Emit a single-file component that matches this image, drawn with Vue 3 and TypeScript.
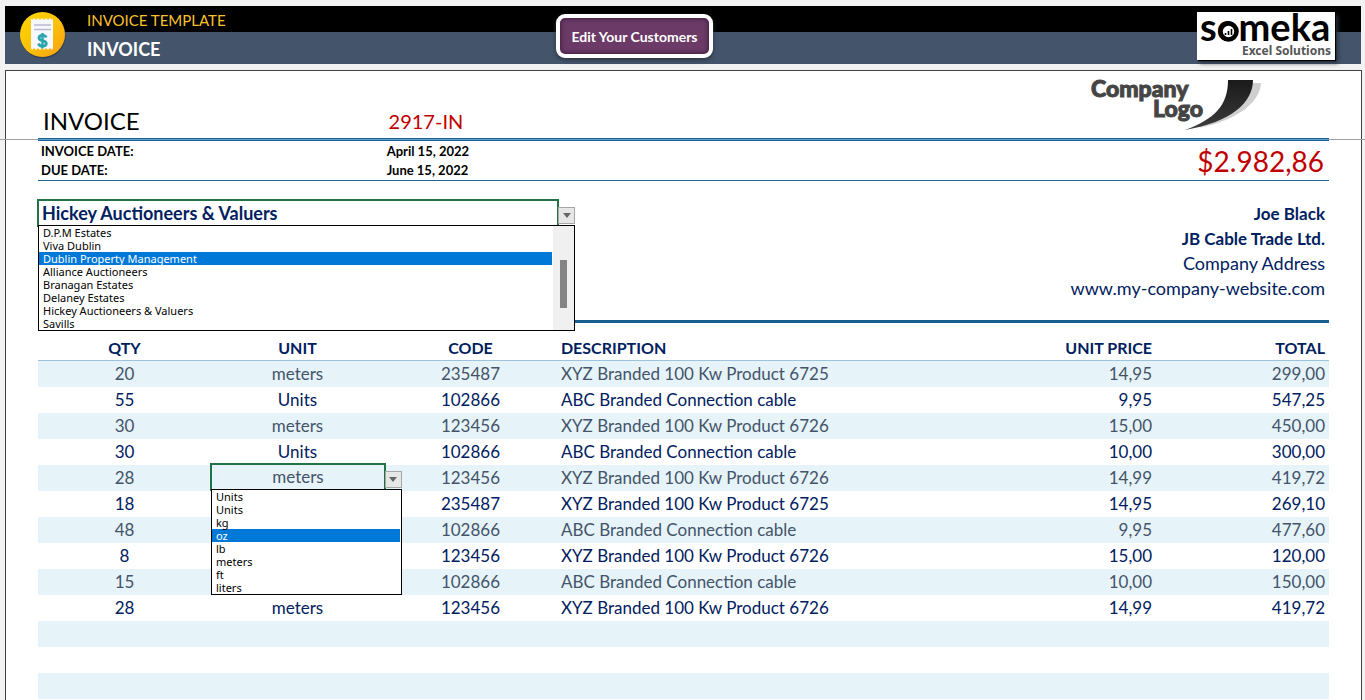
<script setup lang="ts">
import { ref } from 'vue'

interface Line {
  qty: string
  unit: string
  code: string
  description: string
  price: string
  total: string
}

const cable = 'ABC Branded Connection cable'
const product = (n: number): string => `XYZ Branded 100 Kw Product ${n}`

const lines: Line[] = [
  { qty: '20', unit: 'meters', code: '235487', description: product(6725), price: '14,95', total: '299,00' },
  { qty: '55', unit: 'Units', code: '102866', description: cable, price: '9,95', total: '547,25' },
  { qty: '30', unit: 'meters', code: '123456', description: product(6726), price: '15,00', total: '450,00' },
  { qty: '30', unit: 'Units', code: '102866', description: cable, price: '10,00', total: '300,00' },
  { qty: '28', unit: 'meters', code: '123456', description: product(6726), price: '14,99', total: '419,72' },
  { qty: '18', unit: 'meters', code: '235487', description: product(6725), price: '14,95', total: '269,10' },
  { qty: '48', unit: 'Units', code: '102866', description: cable, price: '9,95', total: '477,60' },
  { qty: '8', unit: 'meters', code: '123456', description: product(6726), price: '15,00', total: '120,00' },
  { qty: '15', unit: 'Units', code: '102866', description: cable, price: '10,00', total: '150,00' },
  { qty: '28', unit: 'meters', code: '123456', description: product(6726), price: '14,99', total: '419,72' },
]
const emptyRows = 3
const activeRow = 4

const customers: string[] = [
  'D.P.M Estates',
  'Viva Dublin',
  'Dublin Property Management',
  'Alliance Auctioneers',
  'Branagan Estates',
  'Delaney Estates',
  'Hickey Auctioneers & Valuers',
  'Savills',
]
const customer = ref('Hickey Auctioneers & Valuers')
const hotCustomer = ref(2)

const units: string[] = ['Units', 'Units', 'kg', 'oz', 'lb', 'meters', 'ft', 'liters']
const activeUnit = ref('meters')
const hotUnit = ref(3)
</script>

<template>
  <div class="page">
    <header class="banner">
      <svg class="badge" viewBox="0 0 48 50" aria-hidden="true">
        <defs>
          <linearGradient id="gold" x1="0" y1="0" x2="1" y2="1">
            <stop offset="0" stop-color="#ffd800" />
            <stop offset="0.55" stop-color="#fdbf0b" />
            <stop offset="1" stop-color="#f99d12" />
          </linearGradient>
        </defs>
        <circle cx="24" cy="25" r="22.5" fill="#2b3442" opacity="0.6" />
        <circle cx="23.5" cy="23.5" r="22.5" fill="url(#gold)" />
        <path
          d="M13 9l2-2 2 2 2-2 2 2 2-2 2 2 2-2 2 2 2-2 2 2 1-2v30l-1 2-2-2-2 2-2-2-2 2-2-2-2 2-2-2-2 2-2-2-2 2-1-2V7z"
          fill="#f7f8fc"
        />
        <path d="M15 14h17M15 18.5h17" stroke="#b9b9cf" stroke-width="1.6" />
        <path
          d="M27.2 26.500c-.6-1.600-1.800-2.200-3.700-2.200-2 0-3.500.9-3.500 2.600 0 3.600 7.300 1.900 7.300 5.500 0 1.800-1.500 2.700-3.800 2.700-2.100 0-3.500-.9-4-2.600"
          fill="none"
          stroke="#2aa5ad"
          stroke-width="2.8"
        />
        <path d="M23.5 22v15.500" stroke="#2aa5ad" stroke-width="2.4" />
      </svg>
      <div class="titles">
        <div class="title-top">INVOICE TEMPLATE</div>
        <div class="title-main">INVOICE</div>
      </div>
      <button class="edit" type="button">Edit Your Customers</button>
      <div class="brand">
        <svg viewBox="0 0 138 48" role="img" aria-label="someka Excel Solutions">
          <text class="brand-name" x="3" y="29">someka</text>
          <circle cx="31.5" cy="19.5" r="8" fill="#fff" stroke="#000" stroke-width="4.6" />
          <path d="M28.500 23v-2M31.500 23v-4M34.500 23v-6" stroke="#000" stroke-width="1.6" />
          <text class="brand-sub" x="134" y="43" text-anchor="end">Excel Solutions</text>
        </svg>
      </div>
    </header>

    <main class="sheet">
      <section class="heading">
        <h1>INVOICE</h1>
        <div class="number">2917-IN</div>
        <svg class="company-logo" viewBox="0 0 174 56" role="img" aria-label="Company Logo">
          <defs>
            <linearGradient id="ink" x1="0" y1="0" x2="0" y2="1">
              <stop offset="0" stop-color="#1a1a1a" />
              <stop offset="1" stop-color="#3c3c3c" />
            </linearGradient>
          </defs>
          <text class="logo-text" x="0" y="22">Company</text>
          <text class="logo-text" x="62" y="42">Logo</text>
          <path d="M160 8h10c-1 18-20 36-62 45 28-10 46-22 52-45z" fill="#cfcfcf" />
          <path d="M137 5h25c0 22-21 42-68 50 30-11 43-25 43-50z" fill="url(#ink)" />
        </svg>
      </section>
      <div class="freeze"><span></span><span class="double"></span><span></span></div>

      <section class="dates">
        <dl>
          <dt>INVOICE DATE:</dt>
          <dd>April 15, 2022</dd>
          <dt>DUE DATE:</dt>
          <dd>June 15, 2022</dd>
        </dl>
        <div class="amount">$2.982,86</div>
      </section>

      <section class="parties">
        <div class="picker customer">
          <select v-model="customer" aria-label="Customer">
            <option v-for="c in customers" :key="c">{{ c }}</option>
          </select>
          <button class="arrow" type="button" aria-label="Show customers">
            <svg viewBox="0 0 8 5"><path d="M0 0h8L4 5z" fill="#666" /></svg>
          </button>
          <div class="popup">
            <ul role="listbox" aria-label="Customers">
              <li
                v-for="(c, i) in customers"
                :key="c"
                role="option"
                :aria-selected="i === hotCustomer"
                :class="{ hot: i === hotCustomer }"
                @mouseenter="hotCustomer = i"
                @click="customer = c"
              >{{ c }}</li>
            </ul>
            <div class="track"><div class="thumb"></div></div>
          </div>
        </div>
        <address>
          <strong>Joe Black</strong>
          <strong>JB Cable Trade Ltd.</strong>
          <span>Company Address</span>
          <span>www.my-company-website.com</span>
        </address>
      </section>

      <table>
        <colgroup>
          <col class="narrow" />
          <col class="narrow" />
          <col class="narrow" />
          <col />
          <col class="narrow" />
          <col class="narrow" />
        </colgroup>
        <thead>
          <tr>
            <th>QTY</th>
            <th>UNIT</th>
            <th>CODE</th>
            <th class="left">DESCRIPTION</th>
            <th class="right">UNIT PRICE</th>
            <th class="right">TOTAL</th>
          </tr>
        </thead>
        <tbody>
          <tr v-for="(line, r) in lines" :key="r">
            <td>{{ line.qty }}</td>
            <td v-if="r === activeRow">
              <div class="picker unit">
                <select v-model="activeUnit" aria-label="Unit">
                  <option v-for="(u, i) in units.slice(1)" :key="i">{{ u }}</option>
                </select>
                <button class="arrow" type="button" aria-label="Show units">
                  <svg viewBox="0 0 8 5"><path d="M0 0h8L4 5z" fill="#666" /></svg>
                </button>
                <div class="popup">
                  <ul role="listbox" aria-label="Units">
                    <li
                      v-for="(u, i) in units"
                      :key="i"
                      role="option"
                      :aria-selected="i === hotUnit"
                      :class="{ hot: i === hotUnit }"
                      @mouseenter="hotUnit = i"
                      @click="activeUnit = u"
                    >{{ u }}</li>
                  </ul>
                </div>
              </div>
            </td>
            <td v-else>{{ line.unit }}</td>
            <td>{{ line.code }}</td>
            <td class="left">{{ line.description }}</td>
            <td class="right">{{ line.price }}</td>
            <td class="right">{{ line.total }}</td>
          </tr>
          <tr v-for="n in emptyRows" :key="'empty' + n">
            <td v-for="c in 6" :key="c"></td>
          </tr>
        </tbody>
      </table>
    </main>
  </div>
</template>

<style>
body {
  margin: 0;
  background: #f2f2f2;
}
</style>

<style scoped>
* {
  box-sizing: border-box;
}
.page {
  display: flex;
  flex-direction: column;
  height: 100vh;
  overflow: hidden;
  padding: 6px 3px 0 5px;
  font-family: Lato, "Liberation Sans", sans-serif;
  color: #002060;
}
.banner {
  display: grid;
  grid-template-columns: 82px calc(41% - 87px) auto 1fr;
  flex: none;
  height: 58px;
  margin-right: 1px;
  background: linear-gradient(#000 26px, #44546a 26px);
}
.badge {
  width: 48px;
  height: 50px;
  margin: 5px 0 0 14px;
}
.title-top {
  height: 26px;
  font-size: 15px;
  line-height: 28px;
  color: #fbc02d;
}
.title-main {
  font-size: 18px;
  font-weight: 700;
  line-height: 34px;
  color: #fff;
}
.edit {
  width: 157px;
  height: 44px;
  margin-top: 8px;
  padding: 2px 0 0;
  border: 4px solid #fff;
  border-radius: 9px;
  background: #6b3a67;
  box-shadow: inset 0 0 4px 1px #40203f, 0 2px 4px #2b3442;
  font: 700 14px/20px Lato, "Liberation Sans", sans-serif;
  color: #fff;
}
.brand {
  justify-self: end;
  width: 138px;
  height: 48px;
  margin: 6px 26px 0 0;
  background: #fff;
  box-shadow: 1px 1px 1px #000, 3px 3px 4px #2b3442;
}
.brand svg {
  display: block;
  overflow: visible;
}
.brand-name {
  font-size: 38px;
  font-weight: 700;
}
.brand-sub {
  font: 700 12px "Noto Sans", sans-serif;
  fill: #555;
}
.sheet {
  flex: 1;
  margin-top: 6px;
  padding: 0 32px;
  border: 1px solid #404040;
  border-bottom: 0;
  background: #fff;
}
.heading {
  display: grid;
  grid-template-columns: 27% 1fr 174px;
  height: 67px;
}
h1 {
  margin: 0;
  padding: 34px 0 0 5px;
  font-size: 24px;
  font-weight: 400;
  line-height: 32px;
  color: #000;
}
.number {
  padding: 34px 0 0 2px;
  font-size: 20px;
  line-height: 32px;
  color: #c00000;
}
.company-logo {
  width: 174px;
  height: 56px;
  margin: 4px 0 0 -64px;
}
.logo-text {
  font-size: 23px;
  font-weight: 900;
  fill: #454545;
  stroke: #454545;
  stroke-width: 1px;
}
.freeze {
  display: grid;
  grid-template-columns: 38px 1fr 36px;
  align-items: center;
  height: 3px;
  margin: 0 -36px 0 -38px;
}
.freeze span {
  height: 1px;
  background: #a0a0a0;
}
.freeze .double {
  height: 3px;
  border: solid #1f5f8f;
  border-width: 1px 0;
  background: #5fa3cf;
}
.dates {
  display: flex;
  justify-content: space-between;
  height: 40px;
  border-bottom: 1px solid #1f6391;
}
dl {
  display: grid;
  grid-template-columns: 27% 1fr;
  flex: 1;
  margin: 0 -132px 0 0;
  padding-top: 1px;
  font-size: 13px;
  font-weight: 700;
  line-height: 19px;
  color: #000;
}
dt {
  padding-left: 3px;
}
dd {
  margin: 0;
}
.amount {
  padding-right: 5px;
  font-size: 28px;
  line-height: 40px;
  color: #c00000;
}
.parties {
  display: flex;
  justify-content: space-between;
  align-items: flex-start;
  height: 142px;
  padding-top: 18px;
  border-bottom: 3px solid #156090;
}
.picker {
  position: relative;
}
.customer {
  width: 522px;
  margin-left: -1px;
}
.picker select {
  display: block;
  width: 100%;
  height: 28px;
  margin: 0;
  padding: 0 3px;
  border: 2px solid #217346;
  border-radius: 0;
  outline: 0;
  appearance: none;
  background: transparent;
  font: 700 18px/24px Lato, "Liberation Sans", sans-serif;
  color: #002060;
}
.arrow {
  position: absolute;
  top: 8px;
  left: 100%;
  display: grid;
  place-items: center;
  width: 17px;
  height: 17px;
  margin-left: -1px;
  padding: 0;
  border: 1px solid #a6a6a6;
  background: #e6e6e6;
}
.arrow svg {
  width: 8px;
  height: 5px;
}
.popup {
  position: absolute;
  top: 26px;
  left: 1px;
  right: -16px;
  z-index: 1;
  display: flex;
  border: 1px solid #000;
  background: #fff;
}
ul {
  flex: 1;
  margin: 0;
  padding: 0 1px 0 0;
  list-style: none;
}
li {
  height: 13px;
  padding-left: 4px;
  font: 400 11px/14px "Noto Sans", "Open Sans", sans-serif;
  text-align: left;
  white-space: nowrap;
  color: #000;
}
li.hot {
  background: #0078d7;
  color: #fff;
}
.track {
  width: 21px;
  padding: 34px 7px 0;
  background: #f0f0f0;
}
.thumb {
  height: 48px;
  background: #858585;
}
address {
  display: grid;
  padding: 2px 4px 0 0;
  font-size: 18px;
  font-style: normal;
  line-height: 25px;
  text-align: right;
}
address strong {
  font-size: 17px;
}
table {
  width: 100%;
  border-collapse: separate;
  border-spacing: 0;
  table-layout: fixed;
  font-size: 17px;
}
.narrow {
  width: 13.4%;
}
th {
  height: 38px;
  padding: 12px 0 0;
  border-bottom: 1px solid #9dc3dc;
  font-size: 16px;
  font-weight: 700;
  line-height: 25px;
}
td {
  height: 26px;
  padding: 0;
  line-height: 26px;
  text-align: center;
}
tbody tr:nth-child(odd) {
  background: #e6f3f8;
  color: #44546a;
}
th.left,
td.left {
  padding-left: 4px;
  text-align: left;
}
th.right,
td.right {
  padding-right: 4px;
  text-align: right;
}
.unit {
  height: 28px;
  margin: -2px -2px 0 -1px;
}
.unit select {
  font-size: 17px;
  font-weight: 400;
  text-align: center;
  text-align-last: center;
  color: #44546a;
}
</style>
